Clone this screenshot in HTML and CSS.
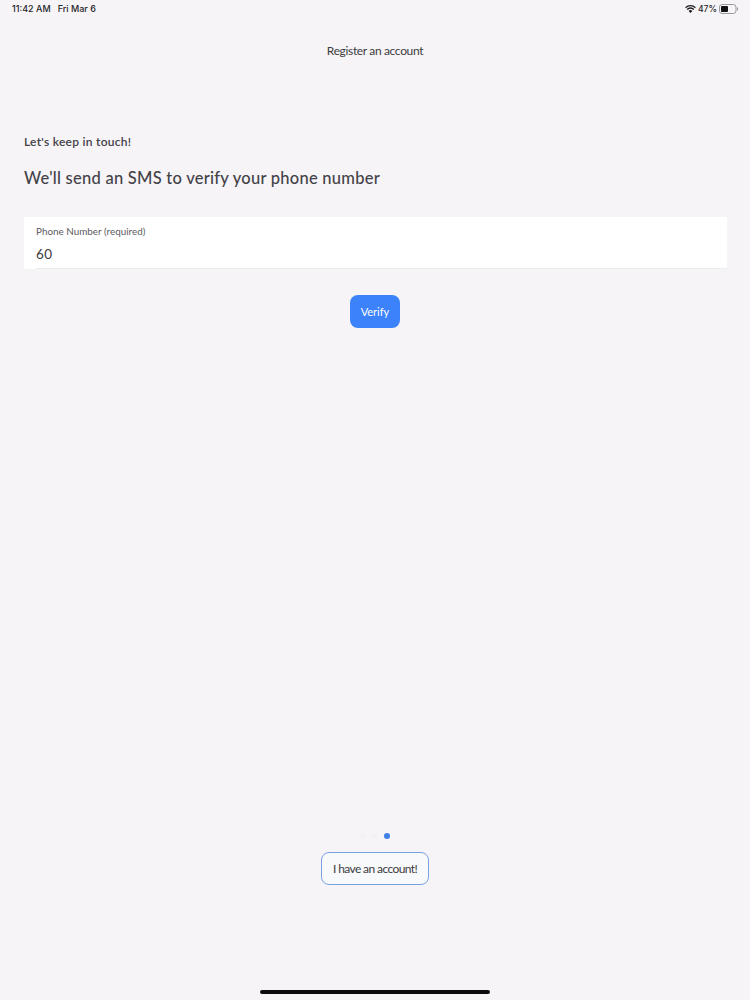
FILE: index.html
```html
<!DOCTYPE html>
<html lang="en">
<head>
<meta charset="utf-8">
<title>Register an account</title>
<link rel="stylesheet" href="styles.css">
</head>
<body>
<div class="page">
  <div class="status">
    <div class="status-left"><span>11:42 AM</span><span>Fri Mar 6</span></div>
    <div class="status-right">
      <svg class="wifi" width="11" height="8" viewBox="0 0 12 9"><path d="M6 9 3.9 6.7a3 3 0 0 1 4.2 0ZM2.9 5.7 1.7 4.4a6.1 6.1 0 0 1 8.6 0L9.1 5.7a4.4 4.4 0 0 0-6.2 0ZM.9 3.6 0 2.5a8.6 8.6 0 0 1 12 0l-.9 1.1a7.3 7.3 0 0 0-10.2 0Z" fill="#1a1a1e"/></svg>
      <span class="battery-level">47%</span>
      <svg class="battery" width="20" height="10" viewBox="0 0 20 10"><rect x=".5" y=".5" width="16.5" height="9" rx="2.5" fill="none" stroke="#9a9a9e"/><rect x="2" y="2" width="7" height="6" rx="1" fill="#111"/><path d="M18 3.3c.8.3 1.2 1 1.2 1.7s-.4 1.4-1.2 1.7Z" fill="#9a9a9e"/></svg>
    </div>
  </div>
  <header class="title">Register an account</header>
  <main class="content">
    <p class="eyebrow">Let's keep in touch!</p>
    <h1 class="heading">We'll send an SMS to verify your phone number</h1>
    <div class="field">
      <div class="field-label">Phone Number (required)</div>
      <div class="field-value">60</div>
    </div>
    <div class="actions"><button class="verify">Verify</button></div>
  </main>
  <footer class="footer">
    <div class="dots"><span class="dot"></span><span class="dot"></span><span class="dot active"></span></div>
    <button class="account">I have an account!</button>
  </footer>
  <div class="home"></div>
</div>
</body>
</html>
```
FILE: styles.css
```css
* { box-sizing: border-box; }
html, body { margin: 0; padding: 0; }
body { background: #f6f4f7; color: #3c3b40; font-family: Lato, "Open Sans", sans-serif; }
.page { position: relative; width: 750px; height: 1000px; display: flex; flex-direction: column; overflow: hidden; }
.status { height: 17px; padding: 0 11px 0 12px; display: flex; justify-content: space-between; align-items: center; font-family: Inter, "Liberation Sans", sans-serif; font-size: 9px; font-weight: 500; color: #26262a; }
.status-left { display: flex; gap: 7px; }
.status-right { display: flex; align-items: center; gap: 2px; }
.battery-level { font-size: 8.6px; }
.title { margin-top: 26px; text-align: center; font-size: 12px; line-height: 16px; letter-spacing: -.35px; color: #3c3b40; }
.content { padding: 0 23px 0 24px; }
.eyebrow { margin: 75px 0 0; font-size: 12px; line-height: 16px; font-weight: 600; letter-spacing: .27px; color: #434247; }
.heading { margin: 17px 0 0; font-size: 16.5px; line-height: 22px; font-weight: 500; letter-spacing: .25px; color: #434247; }
.field { margin-top: 28px; height: 52px; padding: 7px 0 0 12px; background: #fff; }
.field-label { font-size: 9.9px; line-height: 14px; color: #5c5b61; }
.field-value { margin-top: 7px; height: 24px; padding-top: 1px; border-bottom: 1px solid #ecebee; font-size: 13.5px; line-height: 17px; letter-spacing: .5px; color: #3c3b40; }
.actions { margin-top: 26px; padding-right: 1px; display: flex; justify-content: center; }
.verify { width: 50px; height: 33px; padding: 0; border: 0; border-radius: 8px; background: #3b82fb; color: #fff; font: 11px/33px Lato, sans-serif; }
.footer { margin-top: auto; padding-bottom: 115px; display: flex; flex-direction: column; align-items: center; }
.dots { display: flex; gap: 6px; height: 6px; }
.dot { width: 6px; height: 6px; border-radius: 50%; background: #f2f1f4; }
.dot.active { background: #3f7fe6; }
.account { margin-top: 13px; width: 108px; height: 33px; padding: 0; border: 1px solid #7a9fe6; border-radius: 8px; background: #f8f9fa; color: #3c3b40; font: 12px/31px Lato, sans-serif; letter-spacing: -.6px; }
.home { position: absolute; left: 260px; bottom: 6px; width: 230px; height: 4px; border-radius: 2px; background: #0a0a0c; }
```
